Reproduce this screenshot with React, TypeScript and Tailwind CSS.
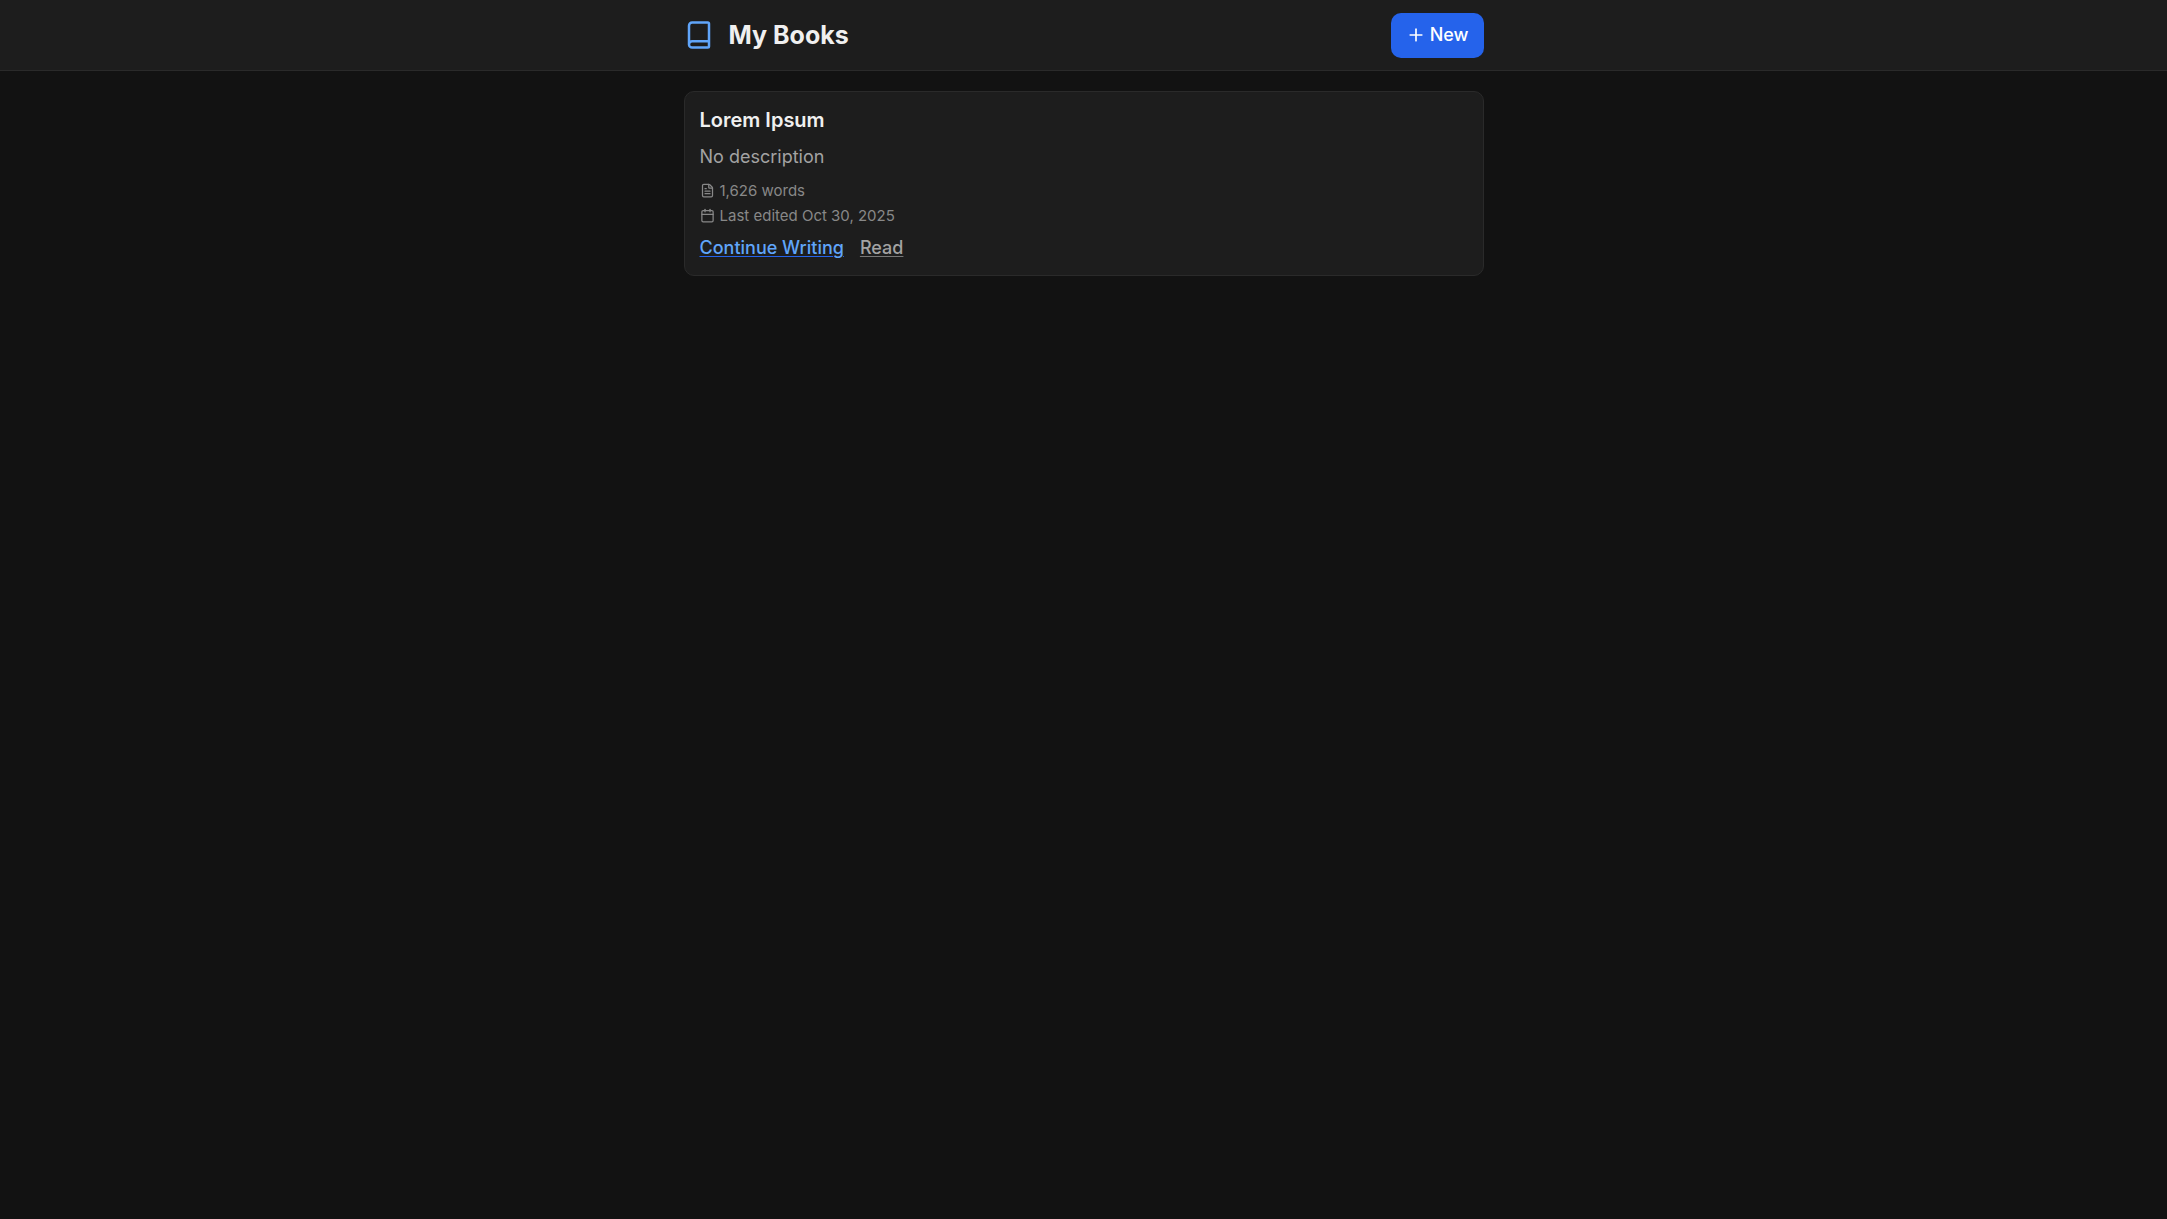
import { Book, Calendar, FileText, Plus } from "lucide-react";

const books = [
  {
    id: "lorem-ipsum",
    title: "Lorem Ipsum",
    description: "",
    words: 1626,
    edited: "Oct 30, 2025",
  },
];

function Header() {
  return (
    <header className="border-b border-[#2a2a2a] bg-[#1d1d1d]">
      <div className="mx-auto flex h-[70px] max-w-[800px] items-center justify-between">
        <div className="flex items-center gap-[15px]">
          <Book size={30} className="text-[#60a5fa]" />
          <h1 className="text-[25px] leading-8 font-bold text-[#f0f0f0]">My Books</h1>
        </div>
        <button type="button" className="flex h-[45px] items-center gap-1 rounded-[10px] bg-[#2563eb] px-[15px] text-lg font-medium text-white">
          <Plus size={20} strokeWidth={2} />
          New
        </button>
      </div>
    </header>
  );
}

function BookCard({ book }: { book: (typeof books)[number] }) {
  return (
    <article className="rounded-[10px] border border-[#2a2a2a] bg-[#1d1d1d] p-[15px]">
      <h2 className="text-xl leading-[26px] font-semibold text-[#f0f0f0]">{book.title}</h2>
      <p className="mt-3 text-lg leading-6 text-[#a3a3a3]">{book.description || "No description"}</p>
      <ul className="mt-[9px] text-[15px] leading-[25px] text-[#888888]">
        <li className="flex items-center gap-[5px]">
          <FileText size={15} strokeWidth={2} />
          {book.words.toLocaleString("en-US")} words
        </li>
        <li className="flex items-center gap-[5px]">
          <Calendar size={15} strokeWidth={2} />
          Last edited {book.edited}
        </li>
      </ul>
      <div className="mt-2 flex gap-4 text-lg leading-6">
        <a href={`#write-${book.id}`} className="font-medium text-[#60a5fa] underline decoration-[#2563eb] decoration-1 underline-offset-2">
          Continue Writing
        </a>
        <a href={`#read-${book.id}`} className="font-medium text-[#a3a3a3] underline decoration-[#777777] decoration-1 underline-offset-2">
          Read
        </a>
      </div>
    </article>
  );
}

export default function App() {
  return (
    <div className="min-h-screen bg-[#121212] font-[Inter,sans-serif]">
      <Header />
      <main className="mx-auto flex max-w-[800px] flex-col gap-5 py-5">
        {books.map((book) => (
          <BookCard key={book.id} book={book} />
        ))}
      </main>
    </div>
  );
}
